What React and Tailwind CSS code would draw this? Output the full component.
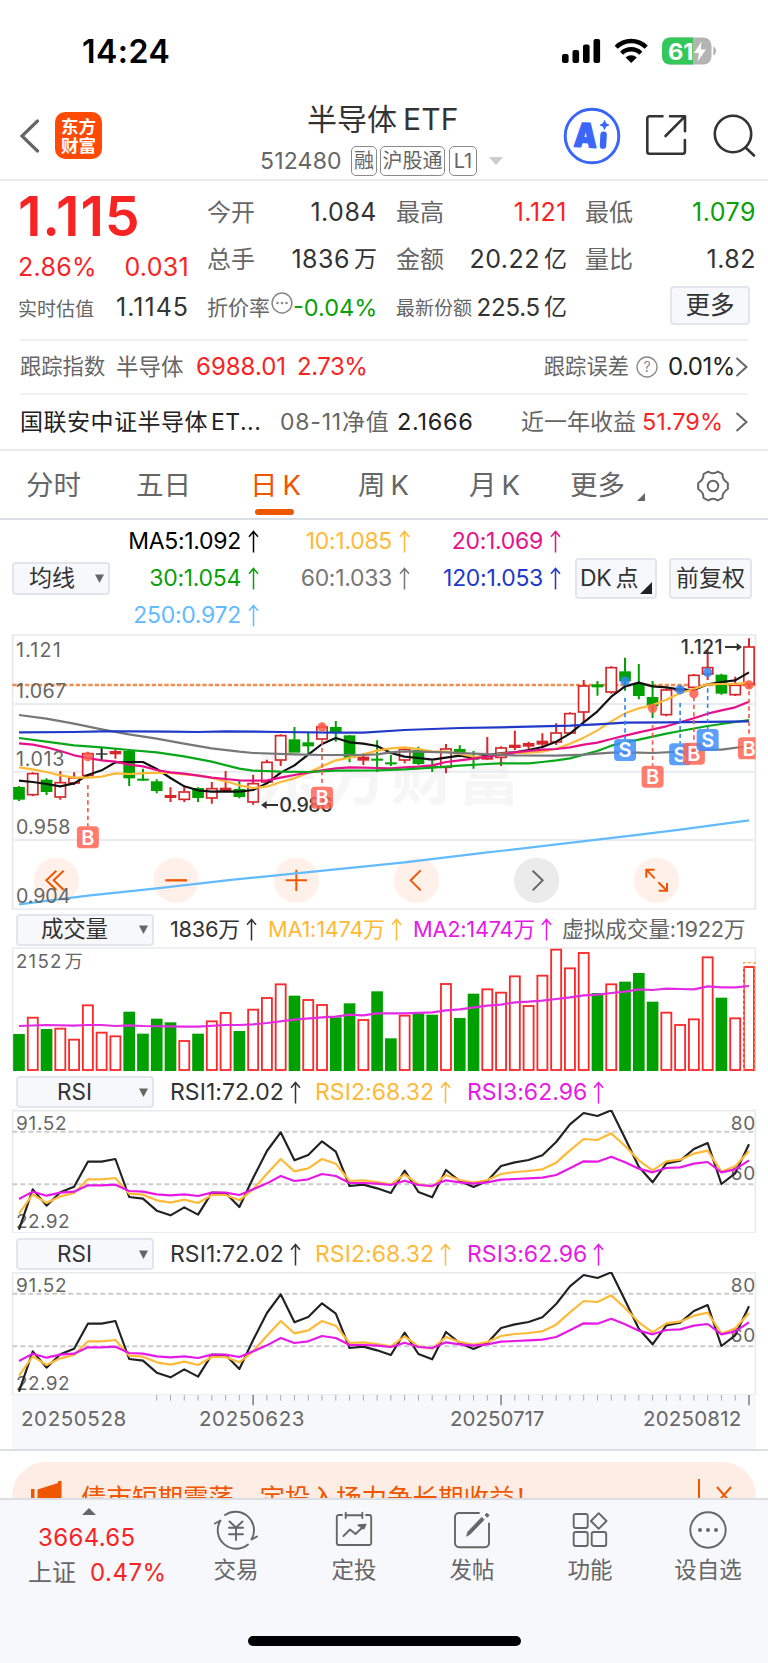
import React from "react";

const STEP = 41.32;
const X0 = 57;
const cx = (i) => X0 + i * STEP;
const line = (pts) => pts.map((p) => p.join(",")).join(" ");
const series = (ys) => ys.map((y, i) => `${cx(i).toFixed(1)},${y}`).join(" ");

/* [kind, body top, body bottom, high, low]; coordinates are thirds of a pixel */
const CANDLES = [
  ["g", 487, 523, 483, 528], ["r", 445, 510, 442, 514], ["g", 465, 500, 460, 510], ["r", 472, 517, 438, 524],
  ["r", 458, 475, 442, 480], ["r", 385, 452, 380, 458], ["k", 386, 388, 368, 405], ["f", 379, 387, 372, 401],
  ["g", 379, 459, 375, 483], ["g", 462, 466, 431, 468], ["g", 470, 497, 463, 505], ["f", 511, 518, 487, 531],
  ["r", 500, 524, 483, 531], ["g", 490, 518, 487, 531], ["r", 490, 520, 471, 536], ["f", 489, 497, 438, 500],
  ["g", 493, 515, 467, 520], ["r", 475, 532, 449, 539], ["r", 411, 472, 404, 475], ["r", 331, 406, 328, 423],
  ["g", 344, 382, 306, 382], ["g", 353, 363, 322, 387], ["r", 305, 343, 298, 346], ["g", 307, 321, 288, 350],
  ["g", 332, 398, 330, 412], ["f", 396, 406, 384, 420], ["g", 402, 406, 346, 441], ["g", 413, 417, 390, 423],
  ["r", 372, 406, 368, 415], ["g", 376, 416, 365, 420], ["g", 423, 427, 408, 441], ["r", 371, 428, 357, 445],
  ["g", 373, 387, 361, 392], ["g", 399, 403, 378, 431], ["f", 390, 403, 336, 405], ["r", 368, 398, 364, 423],
  ["f", 360, 368, 317, 375], ["f", 355, 364, 350, 372], ["f", 348, 358, 325, 370], ["r", 323, 352, 295, 360],
  ["r", 265, 325, 262, 327], ["r", 182, 262, 165, 292], ["g", 179, 186, 168, 212], ["r", 127, 202, 124, 206],
  ["g", 140, 168, 98, 197], ["g", 178, 212, 117, 223], ["g", 217, 243, 168, 279], ["r", 194, 270, 190, 274],
  ["f", 190, 198, 182, 208], ["r", 150, 188, 147, 190], ["r", 127, 148, 75, 165], ["g", 150, 205, 146, 209],
  ["r", 180, 210, 155, 213], ["r", 65, 178, 40, 190],
];

const MA5 = [467, 471, 477, 484, 475, 450, 436, 412, 411, 411, 432, 459, 484, 496, 500, 499, 500, 495, 475, 443, 421, 389, 357, 339, 352, 356, 363, 384, 395, 399, 404, 398, 392, 398, 392, 384, 382, 375, 366, 350, 326, 292, 259, 215, 184, 173, 184, 187, 194, 195, 178, 171, 166, 142];
const MA10 = [427, 433, 441, 451, 458, 458, 455, 445, 447, 445, 443, 444, 448, 451, 459, 469, 481, 489, 485, 471, 460, 443, 424, 406, 398, 388, 377, 370, 367, 372, 379, 380, 387, 395, 396, 386, 384, 383, 380, 371, 356, 338, 316, 289, 265, 250, 240, 224, 204, 192, 178, 177, 177, 173];
const MA20 = [355, 359, 367, 378, 391, 399, 406, 410, 419, 424, 435, 442, 446, 452, 458, 462, 466, 467, 466, 458, 450, 443, 436, 430, 427, 428, 429, 430, 427, 425, 421, 411, 406, 401, 395, 389, 382, 378, 374, 372, 367, 359, 353, 342, 332, 322, 313, 304, 292, 280, 266, 256, 247, 230];
const MA30 = [[57, 339], [139, 350], [222, 361], [305, 367], [387, 375], [470, 382], [552, 394], [635, 410], [718, 431], [759, 437], [842, 440], [925, 441], [1007, 437], [1131, 436], [1214, 433], [1297, 428], [1379, 422], [1462, 417], [1503, 415], [1586, 415], [1627, 411], [1669, 406], [1710, 400], [1751, 389], [1792, 378], [1834, 362], [1875, 353], [1917, 344], [1958, 335], [1999, 326], [2041, 318], [2123, 303], [2206, 291], [2247, 285]];
const MA60 = [[57, 270], [139, 281], [222, 296], [305, 313], [387, 328], [470, 341], [552, 356], [635, 370], [718, 380], [759, 384], [883, 388], [966, 390], [1090, 390], [1131, 388], [1173, 382], [1214, 379], [1255, 380], [1338, 382], [1421, 386], [1545, 391], [1669, 392], [1751, 389], [1834, 383], [1917, 383], [1958, 384], [2041, 380], [2123, 374], [2165, 374], [2247, 363]];
const MA120 = [[57, 322], [222, 321], [305, 319], [387, 319], [511, 320], [594, 321], [676, 319], [842, 321], [1007, 323], [1090, 323], [1214, 315], [1379, 309], [1500, 307], [1710, 302], [1792, 298], [1875, 293], [2000, 292], [2247, 289]];
const MA250 = [[57, 838], [264, 812], [470, 790], [700, 764], [1007, 733], [1214, 712], [1462, 682], [1500, 678], [1875, 634], [2041, 614], [2247, 586]];

const SIGNALS = [
  { i: 5, t: "B", dot: 395, y: 637, from: 480 },
  { i: 22, t: "B", dot: 306, y: 518, from: 346 },
  { i: 44, t: "S", dot: 168, y: 375, from: 218 },
  { i: 46, t: "B", dot: 250, y: 455, from: 300 },
  { i: 48, t: "S", dot: 194, y: 388, from: 234 },
  { i: 49, t: "B", dot: 206, y: 386, from: 216 },
  { i: 50, t: "S", dot: 142, y: 345, from: 190 },
  { i: 53, t: "B", dot: 180, y: 370, from: 198 },
];

const VOLUME = "g388 r337 g373 r370 r403 r300 r382 r393 g321 g387 g342 g353 r407 g387 r348 r323 g379 r313 r278 r237 g273 r284 r299 g338 g296 r344 g260 g401 r331 g326 g330 r236 g340 g267 r252 r262 r213 r302 r211 r133 r189 r143 g265 r237 g231 g205 g291 r322 r359 r342 r156 g279 r339 r185"
  .split(" ")
  .map((s) => [s[0], Number(s.slice(1))]);
const VOLMA = [[57, 363], [139, 360], [222, 362], [264, 360], [305, 360], [346, 363], [387, 361], [429, 363], [552, 365], [594, 365], [676, 360], [718, 360], [759, 358], [801, 354], [883, 344], [966, 337], [1007, 335], [1049, 329], [1090, 331], [1131, 325], [1213, 325], [1297, 322], [1338, 316], [1379, 313], [1462, 302], [1503, 299], [1545, 292], [1586, 290], [1627, 287], [1669, 282], [1710, 277], [1751, 271], [1792, 269], [1834, 264], [1875, 260], [1917, 253], [1958, 255], [1999, 251], [2041, 252], [2082, 253], [2123, 244], [2165, 247], [2206, 247], [2247, 243]];

const RSI1 = [974, 853, 902, 862, 845, 770, 770, 762, 876, 881, 917, 931, 907, 929, 863, 864, 906, 819, 738, 682, 766, 750, 709, 740, 843, 839, 850, 864, 797, 861, 877, 795, 828, 846, 828, 783, 772, 765, 751, 711, 658, 624, 633, 616, 700, 785, 832, 775, 767, 732, 714, 837, 805, 718];
const RSI2 = [926, 868, 894, 874, 864, 823, 823, 819, 866, 869, 886, 893, 884, 894, 870, 870, 886, 853, 806, 762, 799, 790, 762, 776, 828, 826, 831, 838, 808, 838, 845, 810, 825, 833, 825, 807, 801, 798, 793, 773, 736, 702, 705, 685, 723, 766, 796, 769, 764, 746, 737, 800, 784, 738];
const RSI3 = [882, 860, 872, 863, 860, 841, 841, 839, 858, 860, 868, 871, 868, 873, 863, 863, 870, 853, 835, 813, 828, 823, 807, 813, 834, 834, 836, 840, 827, 840, 843, 826, 832, 836, 832, 824, 822, 820, 818, 810, 790, 769, 770, 755, 772, 791, 802, 789, 787, 776, 771, 802, 793, 766];

function Label({ x, y, w, size = 59, fill = "#666", children, ...rest }) {
  return (
    <text x={x} y={y} fontSize={size} fill={fill} textLength={w} lengthAdjust="spacing" {...rest}>
      {children}
    </text>
  );
}

function Up() {
  return (
    <svg className="block h-[23px] w-[11px] shrink-0" viewBox="0 0 11 23" fill="none" stroke="currentColor" strokeWidth="1.5">
      <path d="M5.5 22.5V1.5M1 6.8 5.5 1.5 10 6.8" />
    </svg>
  );
}

function Legend({ color, width, children }) {
  return (
    <div className={`flex shrink-0 items-center gap-[6px] whitespace-nowrap ${width} ${color}`}>
      <span>{children}</span>
      <Up />
    </div>
  );
}

function Down({ className = "" }) {
  return (
    <svg className={`block h-[9px] w-[9px] ${className}`} viewBox="0 0 9 9" fill="#666">
      <path d="M0 0.5h9L4.5 9z" />
    </svg>
  );
}

function Chevron() {
  return (
    <svg className="block h-[20px] w-[13px] shrink-0" viewBox="0 0 13 20" fill="none" stroke="#666" strokeWidth="2">
      <path d="M1.5 1 11.5 10 1.5 19" />
    </svg>
  );
}

function StatusBar() {
  return (
    <div className="flex h-[90px] items-start pt-[37px]">
      <div className="ml-[82px] w-[480px] text-[32px] font-semibold leading-[29px] tracking-[0.5px] text-black">14:24</div>
      <svg className="block h-[28px] w-[156px]" viewBox="562 37 156 28">
        <rect x="562" y="54" width="6.6" height="9" rx="2" />
        <rect x="572.5" y="50" width="6.6" height="13" rx="2" />
        <rect x="583" y="44.5" width="6.6" height="18.5" rx="2" />
        <rect x="593.5" y="39" width="6.6" height="24" rx="2" />
        <g fill="none" stroke="#000" strokeWidth="4.4">
          <path d="M616.2 47.2a21.2 21.2 0 0 1 30 0" />
          <path d="M621.6 53.2a13.6 13.6 0 0 1 19.2 0" />
        </g>
        <path d="M625.6 57.6a8 8 0 0 1 11.2 0L631.2 63z" />
        <clipPath id="battery"><rect x="662" y="37.5" width="49.5" height="27" rx="8" /></clipPath>
        <g clipPath="url(#battery)">
          <rect x="662" y="37" width="50" height="28" fill="#b4b4b4" />
          <rect x="662" y="37" width="31" height="28" fill="#34c759" />
        </g>
        <path d="M713.3 46.5c3.6 1 3.6 8 0 9z" fill="#b4b4b4" />
        <text x="668" y="59.5" fontSize="23" fontWeight="700" fill="#fff" textLength="25.5" lengthAdjust="spacingAndGlyphs">61</text>
        <path d="M701.5 41.5 694 53h5l-1.5 8.5 8.5-12h-5.2z" fill="#fff" />
      </svg>
    </div>
  );
}

function Tag({ children, className }) {
  return (
    <span className={`flex h-[30px] items-center justify-center rounded-[5px] border-[1.5px] border-[#8a8a8a] text-[20px] leading-none text-[#666] ${className}`}>
      {children}
    </span>
  );
}

function Header() {
  return (
    <header className="flex h-[91px] items-center border-b-2 border-[#ebebeb]">
      <svg className="ml-[19px] mt-[2px] block h-[34px] w-[21px]" viewBox="0 0 21 34" fill="none" stroke="#666" strokeWidth="3.2" strokeLinecap="round">
        <path d="M18.5 2 3 17l15.500 15" />
      </svg>
      <div className="ml-[15px] mt-[2px] flex h-[47px] w-[47px] flex-col items-center justify-center rounded-[10px] bg-[#ff4a05] text-[17.5px] font-bold leading-[19px] text-white">
        <span>东方</span>
        <span>财富</span>
      </div>
      <div className="ml-[158px] flex h-[90px] w-[245px] flex-col">
        <div className="ml-[47px] mt-[11px] flex h-[36px] items-center gap-[6px] whitespace-nowrap text-[#333]">
          <span className="text-[30px]">半导体</span>
          <span className="text-[30px] tracking-[0.2px]">ETF</span>
        </div>
        <div className="mt-[9px] flex items-center">
          <span className="w-[91px] text-[23px] leading-[30px] tracking-[0.2px] text-[#666]">512480</span>
          <Tag className="w-[26px]">融</Tag>
          <Tag className="ml-[3px] w-[65px]">沪股通</Tag>
          <Tag className="ml-[4px] w-[28px]">L1</Tag>
          <svg className="ml-[12px] block h-[8px] w-[14px]" viewBox="0 0 14 8" fill="#ccc"><path d="M0 0h14L7 8z" /></svg>
        </div>
      </div>
      <svg className="ml-[58px] mt-[2px] block h-[58px] w-[58px]" viewBox="563.5 107 58 58">
        <circle cx="592.5" cy="136" r="26.8" fill="none" stroke="#3a66fa" strokeWidth="3" />
        <g transform="rotate(3 592 136)">
          <text x="574.5" y="147.500" fontSize="33" fontWeight="900" fill="#3a66fa" stroke="#3a66fa" strokeWidth="1.500" strokeLinejoin="round" textLength="23" lengthAdjust="spacingAndGlyphs">A</text>
          <path d="M604 134v11" stroke="#3a66fa" strokeWidth="6.500" strokeLinecap="round" />
        </g>
        <path d="M605 120.500c.8 2.800 1.600 3.600 4.300 4.500-2.700.9-3.500 1.700-4.300 4.500-.8-2.800-1.600-3.600-4.300-4.500 2.700-.9 3.500-1.700 4.300-4.500z" fill="#3a66fa" stroke="#3a66fa" />
      </svg>
      <svg className="ml-[24px] mt-[1px] block h-[42px] w-[42px]" viewBox="0 0 42 42" fill="none" stroke="#333" strokeWidth="2.6" strokeLinecap="round" strokeLinejoin="round">
        <path d="M17.500 2.200H4.500a2.200 2.200 0 0 0-2.200 2.200v33.200a2.200 2.200 0 0 0 2.200 2.200h33.200a2.200 2.200 0 0 0 2.200-2.200V26" />
        <path d="M25 2.200h15v15M39.500 2.800 20.500 22" />
      </svg>
      <svg className="ml-[26px] mt-[2px] block h-[44px] w-[44px]" viewBox="0 0 44 44" fill="none" stroke="#333" strokeWidth="2.6" strokeLinecap="round">
        <circle cx="20" cy="20" r="18.200" />
        <path d="M32.500 33.500 41 41.500" />
      </svg>
    </header>
  );
}

function Cell({ label, value, color = "text-[#333]" }) {
  return (
    <div className="flex h-[47px] items-center justify-between whitespace-nowrap">
      <span className="text-[24px] text-[#666]">{label}</span>
      <span className={`text-[25px] tracking-[0.5px] ${color}`}>{value}</span>
    </div>
  );
}

function Unit({ n, u }) {
  return (
    <span className="flex items-center gap-[4px]">
      <span>{n}</span>
      <span className="text-[23px] tracking-normal">{u}</span>
    </span>
  );
}

function Quote() {
  return (
    <section className="flex h-[158px] pl-[18px] pt-[8px]">
      <div className="flex w-[171px] flex-col">
        <div className="h-[54px] text-[55.500px] font-semibold leading-[54px] tracking-[0.900px] text-[#f82424]">1.115</div>
        <div className="flex h-[48px] items-center justify-between text-[25px] tracking-[0.300px] text-[#f82424]">
          <span>2.86%</span>
          <span>0.031</span>
        </div>
        <div className="flex h-[32px] items-center justify-between text-[#333]">
          <span className="pt-[4px] text-[19px] text-[#666]">实时估值</span>
          <span className="text-[25px] tracking-[1px]">1.1145</span>
        </div>
      </div>
      <div className="ml-[18px] w-[170px]">
        <Cell label="今开" value="1.084" />
        <Cell label="总手" value={<Unit n="1836" u="万" />} />
        <div className="flex h-[49px] items-center whitespace-nowrap">
          <span className="text-[21px] text-[#666]">折价率</span>
          <svg className="mb-[10px] ml-[1px] block h-[22px] w-[22px] shrink-0" viewBox="0 0 22 22" fill="#888">
            <circle cx="11" cy="11" r="9.900" fill="none" stroke="#888" strokeWidth="1.500" />
            <circle cx="6.500" cy="11" r="1.300" /><circle cx="11" cy="11" r="1.300" /><circle cx="15.500" cy="11" r="1.300" />
          </svg>
          <span className="ml-auto text-[23.500px] text-[#09a009]">-0.04%</span>
        </div>
      </div>
      <div className="ml-[19px] w-[171px]">
        <Cell label="最高" value="1.121" color="text-[#f82424]" />
        <Cell label="金额" value={<Unit n="20.22" u="亿" />} />
        <div className="flex h-[49px] items-center justify-between whitespace-nowrap">
          <span className="pt-[2px] text-[19px] text-[#666]">最新份额</span>
          <span className="text-[24px] tracking-[-0.200px] text-[#333]"><Unit n="225.5" u="亿" /></span>
        </div>
      </div>
      <div className="ml-[18px] w-[171px]">
        <Cell label="最低" value="1.079" color="text-[#09a009]" />
        <Cell label="量比" value="1.82" />
        <div className="ml-[85px] mt-[3px] flex h-[39px] w-[80px] items-center justify-center rounded-[4px] border-2 border-[#e3e5ec] bg-[#f7f8fb] text-[24.500px] text-[#333]">更多</div>
      </div>
    </section>
  );
}

function InfoRows() {
  return (
    <section className="border-b-2 border-[#ebebeb]">
      <div className="mx-[20px] flex h-[56px] items-center whitespace-nowrap border-y-2 border-[#f1f1f1] text-[21.300px] text-[#666]">
        <span className="w-[96px]">跟踪指数</span>
        <span className="w-[80px] text-[22.500px]">半导体</span>
        <span className="w-[101px] text-[24px] text-[#f82424]">6988.01</span>
        <span className="text-[24px] tracking-[-0.500px] text-[#f82424]">2.73%</span>
        <span className="ml-auto">跟踪误差</span>
        <svg className="ml-[7px] block h-[22px] w-[22px]" viewBox="0 0 22 22">
          <circle cx="11" cy="11" r="10" fill="none" stroke="#888" strokeWidth="1.300" />
          <text x="11" y="16" textAnchor="middle" fontSize="14" fill="#888">?</text>
        </svg>
        <span className="ml-[10px] w-[67px] text-[24px] tracking-[-0.500px] text-[#222]">0.01%</span>
        <Chevron />
      </div>
      <div className="mx-[20px] flex h-[54px] items-center whitespace-nowrap text-[23px] text-[#666]">
        <span className="w-[260px] tracking-[0.500px] text-[#222]">国联安中证半导体<span className="ml-[3px]">ET...</span></span>
        <span className="w-[117px] tracking-[0.800px]">08-11净值</span>
        <span className="text-[23.500px] tracking-[0.700px] text-[#222]">2.1666</span>
        <span className="ml-auto">近一年收益</span>
        <span className="ml-[6px] w-[93px] text-[23.500px] text-[#f82424]">51.79%</span>
        <Chevron />
      </div>
    </section>
  );
}

function Tabs() {
  return (
    <nav className="flex h-[69px] items-center whitespace-nowrap border-b-2 border-[#dcdee6] text-[27.500px] text-[#666]">
      <span className="ml-[26px] mt-[3px] w-[110px]">分时</span>
      <span className="mt-[3px] w-[114px]">五日</span>
      <span className="relative mt-[3px] flex w-[108px] gap-[5px] text-[#ef5600]">
        <span>日</span><span>K</span>
        <i className="absolute left-[5px] top-[37px] h-[6px] w-[39px] rounded-full bg-[#ef5600]" />
      </span>
      <span className="mt-[3px] flex w-[111px] gap-[5px]"><span>周</span><span>K</span></span>
      <span className="mt-[3px] flex w-[101px] gap-[5px]"><span>月</span><span>K</span></span>
      <span className="mt-[3px] w-[67px]">更多</span>
      <svg className="mt-[24px] block h-[8px] w-[8px]" viewBox="0 0 8 8" fill="#666"><path d="M8 0v8H0z" /></svg>
      <svg className="ml-[51px] mt-[2px] block h-[32px] w-[34px]" viewBox="0 0 34 32" fill="none" stroke="#666" strokeWidth="2" strokeLinejoin="round">
        <circle cx="17" cy="16" r="5.300" />
        <path d="M12.200 1.500Q17 5 21.800 1.500L26.500 4.200Q26.200 9.500 31.800 13V19Q26.200 22.500 26.500 27.800L21.800 30.500Q17 27 12.200 30.500L7.500 27.800Q7.800 22.500 2.200 19V13Q7.800 9.500 7.500 4.200Z" />
      </svg>
    </nav>
  );
}

const MA_LEGEND = [
  ["MA5:1.092", "text-black"], ["10:1.085", "text-[#ffb937]"], ["20:1.069", "text-[#e6108a]"],
  ["30:1.054", "text-[#09a009]"], ["60:1.033", "text-[#777]"], ["120:1.053", "text-[#2139c8]"],
  ["250:0.972", "text-[#62bbff]"],
];

function MaLegend() {
  return (
    <section className="flex h-[114px] items-start">
      <div className="ml-[12px] mt-[42px] flex h-[33px] w-[98px] items-center rounded-[4px] border-2 border-[#e3e5ec] bg-[#f7f8fb] pl-[15px] text-[23px] text-[#333]">
        均线<Down className="ml-[20px]" />
      </div>
      <div className="-ml-[2px] mt-[3px] grid w-[453px] grid-cols-3 text-[23px] tracking-[-0.300px]">
        {MA_LEGEND.map(([t, c]) => (
          <div key={t} className={`flex h-[37px] items-center justify-end gap-[7px] whitespace-nowrap ${c}`}>
            <span>{t}</span>
            <Up />
          </div>
        ))}
      </div>
      <div className="relative ml-[14px] mt-[38px] flex h-[41px] w-[82px] items-center gap-[4px] rounded-[4px] border-2 border-[#e3e5ec] bg-[#f7f8fb] pl-[3px] text-[23px] text-[#333]">
        <span className="tracking-[-0.300px]">DK</span><span>点</span>
        <svg className="absolute bottom-[3px] right-[3px] h-[12px] w-[12px]" viewBox="0 0 12 12" fill="#222"><path d="M12 0v12H0z" /></svg>
      </div>
      <div className="ml-[12px] mt-[38px] flex h-[41px] w-[83px] items-center justify-center rounded-[4px] border-2 border-[#e3e5ec] bg-[#f7f8fb] text-[23px] text-[#333]">前复权</div>
    </section>
  );
}

function Candle({ i, c }) {
  const [k, top, bottom, high, low] = c;
  const x = cx(i);
  const color = k === "g" ? "#00a000" : k === "k" ? "#222" : "#d6282c";
  const filled = k !== "r";
  return (
    <g>
      <path d={`M${x} ${high}V${top}M${x} ${bottom}V${low}`} stroke={color} strokeWidth="6" />
      {filled ? (
        <rect x={x - 17.500} y={top - 1} width="35" height={bottom - top + 2} fill={color} />
      ) : (
        <rect x={x - 15.500} y={top + 1} width="31" height={bottom - top - 2} fill="#fff" stroke={color} strokeWidth="5" />
      )}
    </g>
  );
}

function Control({ x, gray = false, children }) {
  return (
    <g transform={`translate(${x} 766)`} fill="none" stroke={gray ? "#666" : "#ef5600"} strokeWidth="6">
      <circle r="68" fill={gray ? "#ebebeb" : "#fff1ea"} stroke="none" />
      {children}
    </g>
  );
}

function CandleChart() {
  return (
    <svg className="block h-[276px] w-[768px]" viewBox="0 27 2304 828">
      <g fill="#f6f6f6" fontWeight="700">
        <text x="772" y="522" fontSize="190" textLength="790" lengthAdjust="spacing">东方财富</text>
      </g>
      <g stroke="#e8ebf0" strokeWidth="6">
        <path d="M37 237H2267M37 440H2267M37 645H2267" />
        <rect x="38" y="29" width="2228" height="824" fill="none" stroke="#e8eaed" />
      </g>
      <path d="M37 180H2267" stroke="#f08c50" strokeWidth="7" strokeDasharray="13 6" />
      <Control x={169}><path d="M0-29-30 0 0 29M22-29-8 0 22 29" /></Control>
      <Control x={528}><path d="M-32 0H33" strokeWidth="7" /></Control>
      <Control x={889}><path d="M-32 0H32M0-32V32" /></Control>
      <Control x={1249}><path d="M13-30-17 0 13 30" /></Control>
      <Control x={1610} gray><path d="M-12-29 18 0-12 30" /></Control>
      <Control x={1969}><path d="M-30-8V-32H-5M-30-32-5-6M32 8V31H7M32 31 6 6" /></Control>
      {CANDLES.map((c, i) => <Candle key={i} i={i} c={c} />)}
      <g fill="none" strokeWidth="6.500" strokeLinejoin="round">
        <polyline points={series(MA5)} stroke="#111" />
        <polyline points={series(MA10)} stroke="#ffb937" />
        <polyline points={series(MA20)} stroke="#e6108a" />
        <polyline points={line(MA30)} stroke="#09a81a" />
        <polyline points={line(MA60)} stroke="#777" />
        <polyline points={line(MA120)} stroke="#2139c8" />
        <polyline points={line(MA250)} stroke="#62bbff" />
      </g>
      <Label x={48} y={95} w={134}>1.121</Label>
      <Label x={48} y={219} w={150}>1.067</Label>
      <Label x={48} y={422} w={145}>1.013</Label>
      <Label x={48} y={627} w={163}>0.958</Label>
      <Label x={48} y={833} w={163}>0.904</Label>
      <g fill="#333" fontWeight="500">
        <Label x={2042} y={88} w={126} fill="#333">1.121</Label>
        <Label x={838} y={561} w={160} fill="#333">0.986</Label>
        <path d="M2175 63H2210V54L2226 66 2210 78V69H2175zM834 537H800V528L783 540 800 552V543H834z" />
      </g>
      {SIGNALS.map(({ i, t, dot, y, from }) => {
        const x = cx(i);
        const color = t === "B" ? "#ff5a48" : "#2f86f6";
        return (
          <g key={i}>
            <path d={`M${x} ${from}V${y - 33}`} stroke={color} strokeWidth="5" strokeDasharray="13 10" />
            <circle cx={x} cy={dot} r="14" fill={color} fillOpacity=".85" />
          </g>
        );
      })}
      {SIGNALS.map(({ i, t, y }) => {
        const x = cx(i);
        return (
          <g key={i}>
            <clipPath id={`clip${i}`}><rect x="37" y="27" width="2230" height="828" /></clipPath>
            <g clipPath={`url(#clip${i})`}>
              <rect x={x - 33} y={y - 33} width="66" height="66" rx="11" fill={t === "B" ? "#ff6250" : "#3b8dff"} fillOpacity=".83" />
              <text x={x} y={y + 22} textAnchor="middle" fontSize="60" fontWeight="600" fill="#fff">{t}</text>
            </g>
          </g>
        );
      })}
    </svg>
  );
}

function SelectBox({ children }) {
  return (
    <div className="relative mr-[16px] flex h-[32px] w-[138px] shrink-0 items-center rounded-[4px] border-2 border-[#e3e5ec] bg-[#f7f8fb] text-[#333]">
      <span className="w-[113px] text-center text-[22.500px]">{children}</span>
      <Down className="ml-[8px]" />
    </div>
  );
}

function VolumePanel() {
  return (
    <section>
      <div className="flex h-[37px] items-center pl-[16px] pt-[2px] text-[21.800px] tracking-[-0.250px]">
        <SelectBox>成交量</SelectBox>
        <Legend color="text-[#333]" width="w-[98px]">1836万</Legend>
        <Legend color="text-[#ffb937]" width="w-[145px]">MA1:1474万</Legend>
        <Legend color="text-[#e619e6]" width="w-[149px]">MA2:1474万</Legend>
        <span className="whitespace-nowrap text-[#666]">虚拟成交量:1922万</span>
      </div>
      <svg className="block h-[124px] w-[768px]" viewBox="0 126 2304 372">
        <path d="M38 498V129H2266V498" fill="none" stroke="#e8eaed" strokeWidth="5" />
        <Label x={48} y={188} w={136} size={56}>2152</Label>
        <Label x={194} y={188} w={54} size={54}>万</Label>
        {VOLUME.map(([k, y], i) =>
          k === "g" ? (
            <rect key={i} x={cx(i) - 17.500} y={y - 1} width="35" height={499 - y} fill="#00a000" />
          ) : (
            <rect key={i} x={cx(i) - 15} y={y + 1} width="30" height={494 - y} fill="#fff" stroke="#fa2a2a" strokeWidth="5.500" />
          )
        )}
        <path d="M2231 496V173H2265V496" fill="none" stroke="#ffa742" strokeWidth="4" strokeDasharray="9 7" />
        <polyline points={line(VOLMA)} fill="none" stroke="#e32be3" strokeWidth="6.500" />
      </svg>
    </section>
  );
}

function RsiPanel() {
  return (
    <section>
      <div className="flex h-[39px] items-center pl-[16px] pt-[3px] text-[23px] tracking-[0.050px]">
        <SelectBox>RSI</SelectBox>
        <Legend color="text-[#333]" width="w-[145px]">RSI1:72.02</Legend>
        <Legend color="text-[#ffb937]" width="w-[152px]">RSI2:68.32</Legend>
        <Legend color="text-[#e619e6]" width="w-[152px]">RSI3:62.96</Legend>
      </div>
      <svg className="block h-[123px] w-[768px]" viewBox="0 615 2304 369">
        <rect x="38" y="617" width="2228" height="367" fill="none" stroke="#e8eaed" strokeWidth="5" />
        <path d="M37 680H2267M37 838H2267" stroke="#ccc" strokeWidth="6" strokeDasharray="15 9" />
        <Label x={48} y={674} w={152} size={57}>91.52</Label>
        <Label x={48} y={970} w={161} size={57}>22.92</Label>
        <Label x={2192} y={674} w={74} size={57}>80</Label>
        <Label x={2192} y={826} w={74} size={57}>60</Label>
        <g fill="none" strokeWidth="6.500" strokeLinejoin="round">
          <polyline points={series(RSI1)} stroke="#222" />
          <polyline points={series(RSI2)} stroke="#ffb937" />
          <polyline points={series(RSI3)} stroke="#e619e6" />
        </g>
      </svg>
    </section>
  );
}

function DateAxis() {
  const ticks = Array.from({ length: 44 }, (_, k) => k + 10);
  return (
    <div className="border-b-2 border-[#dcdee6]">
      <div className="mx-[12px] h-[54px] bg-[#f7f8fb] text-[20.500px] text-[#666]">
        <svg className="block h-[11px] w-[744px]" viewBox="36 0 2232 33">
          {ticks.map((i) => {
            const major = i === 17 || i === 35 || i === 53;
            return <path key={i} d={`M${cx(i)} 0V${major ? 31 : 17}`} stroke={major ? "#888" : "#aaa"} strokeWidth={major ? 5 : 3} />;
          })}
        </svg>
        <div className="flex h-[24px] items-center pt-[2px] tracking-[0.600px]">
          <span className="ml-[9px] w-[178px]">20250528</span>
          <span className="w-[251px]">20250623</span>
          <span className="w-[193px] tracking-normal">20250717</span>
          <span className="tracking-[0.200px]">20250812</span>
        </div>
      </div>
    </div>
  );
}

function Banner() {
  return (
    <div className="h-[47px] overflow-hidden px-[12px] pt-[11px]">
      <div className="flex h-[72px] items-start rounded-[34px] bg-[#feede4] pt-[17px] text-[#ef5600]">
        <svg className="ml-[19px] mt-[2px] block h-[36px] w-[31px]" viewBox="0 0 31 36" fill="currentColor">
          <path d="M0 8h3.500v20H0zM6.500 8.500 27 2V0h3.500v34H27v-2L6.500 26z" />
        </svg>
        <span className="ml-[19px] w-[617px] whitespace-nowrap text-[25.500px] leading-[38px]">债市短期震荡，定投入场力争长期收益！</span>
        <i className="block h-[34px] w-[1.500px] bg-[#ef5600]" />
        <svg className="ml-[15px] mt-[7px] block h-[20px] w-[18px]" viewBox="0 0 18 20" fill="none" stroke="currentColor" strokeWidth="2">
          <path d="M2 1 16 17M16 1 2 17" />
        </svg>
      </div>
    </div>
  );
}

function NavItem({ label, children }) {
  return (
    <div className="flex w-[118px] flex-col items-center">
      <svg className="mt-[9px] block h-[42px] w-[44px]" viewBox="-22 -21 44 42" fill="none" stroke="#666" strokeWidth="1.900" strokeLinecap="round" strokeLinejoin="round">
        {children}
      </svg>
      <span className="mt-[1px] text-[22.500px] leading-[36px] text-[#666]">{label}</span>
    </div>
  );
}

function BottomBar() {
  return (
    <footer className="relative flex h-[165px] border-t-2 border-[#dcdee6] bg-[#f7f8fb]">
      <div className="w-[177px] whitespace-nowrap">
        <svg className="ml-[82px] mt-[8px] block h-[7px] w-[14px]" viewBox="0 0 14 7" fill="#666"><path d="M0 7h14L7 0z" /></svg>
        <div className="ml-[38px] mt-[7px] text-[24px] leading-[32px] tracking-[0.350px] text-[#f82424]">3664.65</div>
        <div className="mt-[3px] flex items-center text-[24px] leading-[32px] tracking-[0.500px] text-[#f82424]">
          <span className="ml-[28px] w-[62px] tracking-normal text-[#666]">上证</span>0.47%
        </div>
      </div>
      <NavItem label="交易">
        <path d="M-11-15A18.500 18.500 0 0 1 15.500 9.500L21 6.500M12 14.500A18.500 18.500 0 0 1-15.500-9.500L-21-6.500" />
        <path d="M-6.500-8.500 0-2.500 6.500-8.500M0-2.500V10M-7-2.200H7M-7 4.300H7" />
      </NavItem>
      <NavItem label="定投">
        <path d="M-12-15H-15.200A2 2 0 0 0-17.200-13V13A2 2 0 0 0-15.200 15H15.200A2 2 0 0 0 17.200 13V-13A2 2 0 0 0 15.200-15H12M-8.300-17.300V-12M8.300-17.300V-12M-8.300-14.800H8.300M-10.500 6-4-.5 1.500 4 10-4" />
        <path d="M4.500-4.700 11.500-5.300 9.500-1.500z" fill="#666" />
      </NavItem>
      <NavItem label="发帖">
        <path d="M7-17H-13A4 4 0 0 0-17-13V13A4 4 0 0 0-13 17.200H13A4 4 0 0 0 17 13V-6.500" />
        <path d="M-5.200 5.800-4 1.700 9.800-12.600 12-10.300-1.500 3.800zM13.300-15.300 15-16.700 17-14.700 15.500-13z" fill="#666" strokeWidth="1" />
      </NavItem>
      <NavItem label="功能">
        <rect x="-16.300" y="-16" width="14" height="14" rx="2" />
        <rect x="-16.300" y="2" width="14" height="14" rx="2" />
        <rect x="1.700" y="2" width="14.500" height="14" rx="2" />
        <path d="M8.700-16.800 16.500-9 8.700-1.200 .9-9z" />
      </NavItem>
      <NavItem label="设自选">
        <circle r="17.700" />
        <g fill="#666" stroke="none"><circle cx="-8" r="2" /><circle r="2" /><circle cx="8" r="2" /></g>
      </NavItem>
      <i className="absolute bottom-[17px] left-[248px] h-[10px] w-[273px] rounded-full bg-black" />
    </footer>
  );
}

export default function App() {
  return (
    <main className="h-[1663px] w-[768px] overflow-hidden bg-white font-['Inter','Noto_Sans_CJK_SC',sans-serif] leading-none">
      <StatusBar />
      <Header />
      <Quote />
      <InfoRows />
      <Tabs />
      <MaLegend />
      <CandleChart />
      <VolumePanel />
      <RsiPanel />
      <RsiPanel />
      <DateAxis />
      <Banner />
      <BottomBar />
    </main>
  );
}
